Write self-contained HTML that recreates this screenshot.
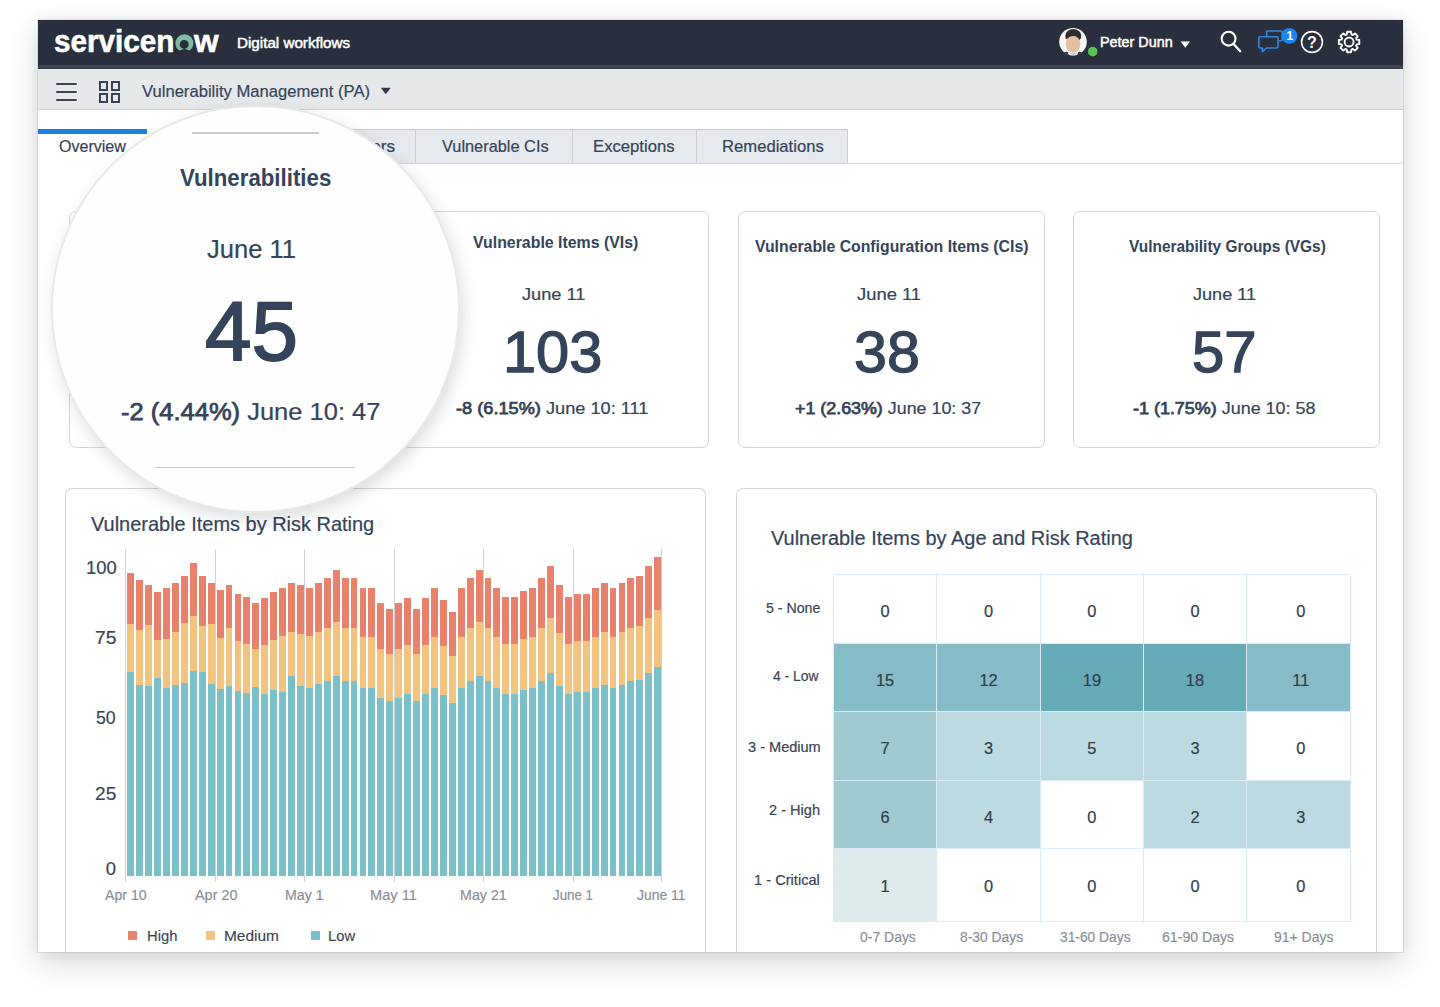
<!DOCTYPE html>
<html><head><meta charset="utf-8"><style>
html,body{margin:0;padding:0;}
body{width:1440px;height:1007px;overflow:hidden;background:#fff;position:relative;font-family:'Liberation Sans', sans-serif;}
.t{position:absolute;white-space:nowrap;transform-origin:0 0;font-family:'Liberation Sans', sans-serif;}
b{font-weight:bold;}
</style></head><body>
<div style="position:absolute;left:38.00px;top:20.00px;width:1365.00px;height:932.00px;background:#fff;box-shadow:0 0 0 1px rgba(0,0,0,0.07), 0 12px 28px rgba(0,0,0,0.15), 0 0 14px rgba(0,0,0,0.06);"></div>
<div style="position:absolute;left:38.00px;top:20.40px;width:1365.00px;height:44.60px;background:#292f3c;"></div>
<div style="position:absolute;left:38.00px;top:65.00px;width:1365.00px;height:3.50px;background:#3c4454;"></div>
<div style="position:absolute;left:38.00px;top:68.50px;width:1365.00px;height:41.80px;background:#e7e8ea;border-bottom:1px solid #cfd2d5;box-sizing:border-box;"></div>
<div style="position:absolute;left:56.00px;top:83.30px;width:20.50px;height:2.20px;background:#3a4352;border-radius:1px;"></div>
<div style="position:absolute;left:56.00px;top:91.20px;width:20.50px;height:2.20px;background:#3a4352;border-radius:1px;"></div>
<div style="position:absolute;left:56.00px;top:98.60px;width:20.50px;height:2.20px;background:#3a4352;border-radius:1px;"></div>
<div style="position:absolute;left:98.50px;top:81.00px;width:9.50px;height:9.50px;border:2px solid #3a4352;box-sizing:border-box;"></div>
<div style="position:absolute;left:110.50px;top:81.00px;width:9.50px;height:9.50px;border:2px solid #3a4352;box-sizing:border-box;"></div>
<div style="position:absolute;left:98.50px;top:93.00px;width:9.50px;height:9.50px;border:2px solid #3a4352;box-sizing:border-box;"></div>
<div style="position:absolute;left:110.50px;top:93.00px;width:9.50px;height:9.50px;border:2px solid #3a4352;box-sizing:border-box;"></div>
<div class="t" style="left:142.20px;top:83.10px;font-size:16.23px;line-height:16.23px;font-weight:normal;color:#35445a;transform:scaleX(1.0243);-webkit-text-stroke:0.20px #35445a;">Vulnerability Management (PA)</div>
<svg style="position:absolute;left:380px;top:87px" width="12" height="8"><polygon points="0.8,0.8 10.8,0.8 5.8,7.2" fill="#2e3b4b"/></svg>
<div style="position:absolute;left:38.00px;top:162.80px;width:1365.00px;height:1.00px;background:#d6d9dd;"></div>
<div style="position:absolute;left:200.00px;top:129.30px;width:648.00px;height:34.00px;background:#e6e9ed;border:1px solid #ccd0d5;border-bottom:none;box-sizing:border-box;"></div>
<div style="position:absolute;left:415.10px;top:129.30px;width:1.00px;height:34.00px;background:#ccd0d5;"></div>
<div style="position:absolute;left:572.10px;top:129.30px;width:1.00px;height:34.00px;background:#ccd0d5;"></div>
<div style="position:absolute;left:696.40px;top:129.30px;width:1.00px;height:34.00px;background:#ccd0d5;"></div>
<div style="position:absolute;left:38.00px;top:129.30px;width:109.30px;height:34.60px;background:#fff;"></div>
<div style="position:absolute;left:38.00px;top:128.90px;width:109.30px;height:4.80px;background:#1b7fe3;"></div>
<div class="t" style="left:58.62px;top:137.78px;font-size:16.38px;line-height:16.38px;font-weight:normal;color:#35445a;transform:scaleX(0.9806);-webkit-text-stroke:0.20px #35445a;">Overview</div>
<div class="t" style="left:250.00px;top:137.68px;font-size:16.38px;line-height:16.38px;font-weight:normal;color:#35445a;transform:scaleX(1.0555);-webkit-text-stroke:0.20px #35445a;">Vulnerability Filters</div>
<div class="t" style="left:442.40px;top:137.68px;font-size:16.38px;line-height:16.38px;font-weight:normal;color:#35445a;transform:scaleX(0.9991);-webkit-text-stroke:0.20px #35445a;">Vulnerable CIs</div>
<div class="t" style="left:592.73px;top:137.68px;font-size:16.38px;line-height:16.38px;font-weight:normal;color:#35445a;transform:scaleX(1.0196);-webkit-text-stroke:0.20px #35445a;">Exceptions</div>
<div class="t" style="left:721.88px;top:137.68px;font-size:16.38px;line-height:16.38px;font-weight:normal;color:#35445a;transform:scaleX(1.0172);-webkit-text-stroke:0.20px #35445a;">Remediations</div>
<div style="position:absolute;left:68.70px;top:211.00px;width:306.60px;height:236.80px;border:1px solid #d3d5d8;border-radius:7px;box-sizing:border-box;background:#fff;"></div>
<div style="position:absolute;left:402.00px;top:211.00px;width:306.80px;height:236.80px;border:1px solid #d3d5d8;border-radius:7px;box-sizing:border-box;background:#fff;"></div>
<div style="position:absolute;left:737.60px;top:211.00px;width:307.20px;height:236.80px;border:1px solid #d3d5d8;border-radius:7px;box-sizing:border-box;background:#fff;"></div>
<div style="position:absolute;left:1073.40px;top:211.00px;width:307.00px;height:236.80px;border:1px solid #d3d5d8;border-radius:7px;box-sizing:border-box;background:#fff;"></div>
<div class="t" style="left:473.30px;top:234.08px;font-size:16.38px;line-height:16.38px;font-weight:bold;color:#35445a;transform:scaleX(0.9712);">Vulnerable Items (VIs)</div>
<div class="t" style="left:521.60px;top:285.76px;font-size:17.10px;line-height:17.10px;font-weight:normal;color:#35445a;transform:scaleX(1.0644);-webkit-text-stroke:0.20px #35445a;">June 11</div>
<div class="t" style="left:503.31px;top:323.13px;font-size:58.26px;line-height:58.26px;font-weight:normal;color:#35445a;transform:scaleX(1.0220);-webkit-text-stroke:1.30px #35445a;">103</div>
<div class="t" style="left:456.40px;top:399.80px;font-size:16.23px;line-height:16.23px;font-weight:normal;color:#35445a;transform:scaleX(1.1211);-webkit-text-stroke:0.20px #35445a;"><span style="-webkit-text-stroke:0.75px currentColor">-8 (6.15%)</span> June 10: 111</div>
<div class="t" style="left:755.00px;top:238.28px;font-size:16.38px;line-height:16.38px;font-weight:bold;color:#35445a;transform:scaleX(0.9663);">Vulnerable Configuration Items (CIs)</div>
<div class="t" style="left:856.50px;top:285.76px;font-size:17.10px;line-height:17.10px;font-weight:normal;color:#35445a;transform:scaleX(1.0763);-webkit-text-stroke:0.20px #35445a;">June 11</div>
<div class="t" style="left:854.47px;top:323.13px;font-size:58.26px;line-height:58.26px;font-weight:normal;color:#35445a;transform:scaleX(1.0164);-webkit-text-stroke:1.30px #35445a;">38</div>
<div class="t" style="left:795.00px;top:399.80px;font-size:16.23px;line-height:16.23px;font-weight:normal;color:#35445a;transform:scaleX(1.1006);-webkit-text-stroke:0.20px #35445a;"><span style="-webkit-text-stroke:0.75px currentColor">+1 (2.63%)</span> June 10: 37</div>
<div class="t" style="left:1128.50px;top:238.28px;font-size:16.38px;line-height:16.38px;font-weight:bold;color:#35445a;transform:scaleX(0.9442);">Vulnerability Groups (VGs)</div>
<div class="t" style="left:1192.50px;top:285.76px;font-size:17.10px;line-height:17.10px;font-weight:normal;color:#35445a;transform:scaleX(1.0593);-webkit-text-stroke:0.20px #35445a;">June 11</div>
<div class="t" style="left:1191.81px;top:323.13px;font-size:58.26px;line-height:58.26px;font-weight:normal;color:#35445a;transform:scaleX(0.9967);-webkit-text-stroke:1.30px #35445a;">57</div>
<div class="t" style="left:1132.50px;top:399.80px;font-size:16.23px;line-height:16.23px;font-weight:normal;color:#35445a;transform:scaleX(1.1061);-webkit-text-stroke:0.20px #35445a;"><span style="-webkit-text-stroke:0.75px currentColor">-1 (1.75%)</span> June 10: 58</div>
<div style="position:absolute;left:65.20px;top:488.30px;width:640.80px;height:463.70px;border:1px solid #d3d5d8;border-radius:7px;box-sizing:border-box;background:#fff;border-bottom:none;border-bottom-left-radius:0;border-bottom-right-radius:0;"></div>
<div style="position:absolute;left:736.30px;top:488.30px;width:640.90px;height:463.70px;border:1px solid #d3d5d8;border-radius:7px;box-sizing:border-box;background:#fff;border-bottom:none;border-bottom-left-radius:0;border-bottom-right-radius:0;"></div>
<div class="t" style="left:91.00px;top:513.55px;font-size:20.29px;line-height:20.29px;font-weight:normal;color:#35445a;transform:scaleX(0.9840);-webkit-text-stroke:0.20px #35445a;">Vulnerable Items by Risk Rating</div>
<div class="t" style="left:771.10px;top:527.88px;font-size:20.72px;line-height:20.72px;font-weight:normal;color:#35445a;transform:scaleX(0.9627);-webkit-text-stroke:0.20px #35445a;">Vulnerable Items by Age and Risk Rating</div>
<div style="position:absolute;left:125.30px;top:548.70px;width:1.00px;height:333.30px;background:#cfd2d6;"></div>
<div style="position:absolute;left:214.80px;top:548.70px;width:1.00px;height:333.30px;background:#cfd2d6;"></div>
<div style="position:absolute;left:304.10px;top:548.70px;width:1.00px;height:333.30px;background:#cfd2d6;"></div>
<div style="position:absolute;left:393.90px;top:548.70px;width:1.00px;height:333.30px;background:#cfd2d6;"></div>
<div style="position:absolute;left:483.30px;top:548.70px;width:1.00px;height:333.30px;background:#cfd2d6;"></div>
<div style="position:absolute;left:573.00px;top:548.70px;width:1.00px;height:333.30px;background:#cfd2d6;"></div>
<div style="position:absolute;left:661.10px;top:548.70px;width:1.00px;height:333.30px;background:#cfd2d6;"></div>
<div style="position:absolute;left:127.35px;top:572.80px;width:6.9px;height:303.40px;background:linear-gradient(to bottom,#e9826c 0,#e9826c 51.20px,#f2c47f 51.20px,#f2c47f 98.80px,#7bbfc8 98.80px,#7bbfc8 100%)"></div>
<div style="position:absolute;left:136.28px;top:580.00px;width:6.9px;height:296.20px;background:linear-gradient(to bottom,#e9826c 0,#e9826c 49.70px,#f2c47f 49.70px,#f2c47f 104.80px,#7bbfc8 104.80px,#7bbfc8 100%)"></div>
<div style="position:absolute;left:145.21px;top:584.70px;width:6.9px;height:291.50px;background:linear-gradient(to bottom,#e9826c 0,#e9826c 40.20px,#f2c47f 40.20px,#f2c47f 101.30px,#7bbfc8 101.30px,#7bbfc8 100%)"></div>
<div style="position:absolute;left:154.14px;top:591.90px;width:6.9px;height:284.30px;background:linear-gradient(to bottom,#e9826c 0,#e9826c 48.00px,#f2c47f 48.00px,#f2c47f 85.80px,#7bbfc8 85.80px,#7bbfc8 100%)"></div>
<div style="position:absolute;left:163.07px;top:587.90px;width:6.9px;height:288.30px;background:linear-gradient(to bottom,#e9826c 0,#e9826c 51.20px,#f2c47f 51.20px,#f2c47f 99.60px,#7bbfc8 99.60px,#7bbfc8 100%)"></div>
<div style="position:absolute;left:172.00px;top:582.80px;width:6.9px;height:293.40px;background:linear-gradient(to bottom,#e9826c 0,#e9826c 49.10px,#f2c47f 49.10px,#f2c47f 101.60px,#7bbfc8 101.60px,#7bbfc8 100%)"></div>
<div style="position:absolute;left:180.93px;top:575.70px;width:6.9px;height:300.50px;background:linear-gradient(to bottom,#e9826c 0,#e9826c 46.80px,#f2c47f 46.80px,#f2c47f 106.80px,#7bbfc8 106.80px,#7bbfc8 100%)"></div>
<div style="position:absolute;left:189.86px;top:563.30px;width:6.9px;height:312.90px;background:linear-gradient(to bottom,#e9826c 0,#e9826c 52.70px,#f2c47f 52.70px,#f2c47f 108.30px,#7bbfc8 108.30px,#7bbfc8 100%)"></div>
<div style="position:absolute;left:198.79px;top:575.70px;width:6.9px;height:300.50px;background:linear-gradient(to bottom,#e9826c 0,#e9826c 50.30px,#f2c47f 50.30px,#f2c47f 96.40px,#7bbfc8 96.40px,#7bbfc8 100%)"></div>
<div style="position:absolute;left:207.72px;top:582.80px;width:6.9px;height:293.40px;background:linear-gradient(to bottom,#e9826c 0,#e9826c 41.30px,#f2c47f 41.30px,#f2c47f 101.20px,#7bbfc8 101.20px,#7bbfc8 100%)"></div>
<div style="position:absolute;left:216.65px;top:590.00px;width:6.9px;height:286.20px;background:linear-gradient(to bottom,#e9826c 0,#e9826c 48.00px,#f2c47f 48.00px,#f2c47f 98.80px,#7bbfc8 98.80px,#7bbfc8 100%)"></div>
<div style="position:absolute;left:225.58px;top:584.70px;width:6.9px;height:291.50px;background:linear-gradient(to bottom,#e9826c 0,#e9826c 42.90px,#f2c47f 42.90px,#f2c47f 100.90px,#7bbfc8 100.90px,#7bbfc8 100%)"></div>
<div style="position:absolute;left:234.51px;top:593.80px;width:6.9px;height:282.40px;background:linear-gradient(to bottom,#e9826c 0,#e9826c 47.00px,#f2c47f 47.00px,#f2c47f 97.40px,#7bbfc8 97.40px,#7bbfc8 100%)"></div>
<div style="position:absolute;left:243.44px;top:597.40px;width:6.9px;height:278.80px;background:linear-gradient(to bottom,#e9826c 0,#e9826c 47.20px,#f2c47f 47.20px,#f2c47f 96.50px,#7bbfc8 96.50px,#7bbfc8 100%)"></div>
<div style="position:absolute;left:252.37px;top:603.00px;width:6.9px;height:273.20px;background:linear-gradient(to bottom,#e9826c 0,#e9826c 46.10px,#f2c47f 46.10px,#f2c47f 84.20px,#7bbfc8 84.20px,#7bbfc8 100%)"></div>
<div style="position:absolute;left:261.30px;top:597.80px;width:6.9px;height:278.40px;background:linear-gradient(to bottom,#e9826c 0,#e9826c 46.80px,#f2c47f 46.80px,#f2c47f 96.10px,#7bbfc8 96.10px,#7bbfc8 100%)"></div>
<div style="position:absolute;left:270.23px;top:591.90px;width:6.9px;height:284.30px;background:linear-gradient(to bottom,#e9826c 0,#e9826c 48.00px,#f2c47f 48.00px,#f2c47f 98.00px,#7bbfc8 98.00px,#7bbfc8 100%)"></div>
<div style="position:absolute;left:279.16px;top:587.90px;width:6.9px;height:288.30px;background:linear-gradient(to bottom,#e9826c 0,#e9826c 48.20px,#f2c47f 48.20px,#f2c47f 104.10px,#7bbfc8 104.10px,#7bbfc8 100%)"></div>
<div style="position:absolute;left:288.09px;top:582.80px;width:6.9px;height:293.40px;background:linear-gradient(to bottom,#e9826c 0,#e9826c 49.30px,#f2c47f 49.30px,#f2c47f 92.80px,#7bbfc8 92.80px,#7bbfc8 100%)"></div>
<div style="position:absolute;left:297.02px;top:584.70px;width:6.9px;height:291.50px;background:linear-gradient(to bottom,#e9826c 0,#e9826c 49.00px,#f2c47f 49.00px,#f2c47f 100.90px,#7bbfc8 100.90px,#7bbfc8 100%)"></div>
<div style="position:absolute;left:305.95px;top:587.90px;width:6.9px;height:288.30px;background:linear-gradient(to bottom,#e9826c 0,#e9826c 48.20px,#f2c47f 48.20px,#f2c47f 99.60px,#7bbfc8 99.60px,#7bbfc8 100%)"></div>
<div style="position:absolute;left:314.88px;top:582.80px;width:6.9px;height:293.40px;background:linear-gradient(to bottom,#e9826c 0,#e9826c 49.30px,#f2c47f 49.30px,#f2c47f 101.20px,#7bbfc8 101.20px,#7bbfc8 100%)"></div>
<div style="position:absolute;left:323.81px;top:577.60px;width:6.9px;height:298.60px;background:linear-gradient(to bottom,#e9826c 0,#e9826c 50.00px,#f2c47f 50.00px,#f2c47f 103.30px,#7bbfc8 103.30px,#7bbfc8 100%)"></div>
<div style="position:absolute;left:332.74px;top:570.10px;width:6.9px;height:306.10px;background:linear-gradient(to bottom,#e9826c 0,#e9826c 52.00px,#f2c47f 52.00px,#f2c47f 106.00px,#7bbfc8 106.00px,#7bbfc8 100%)"></div>
<div style="position:absolute;left:341.67px;top:577.60px;width:6.9px;height:298.60px;background:linear-gradient(to bottom,#e9826c 0,#e9826c 50.00px,#f2c47f 50.00px,#f2c47f 103.30px,#7bbfc8 103.30px,#7bbfc8 100%)"></div>
<div style="position:absolute;left:350.60px;top:577.60px;width:6.9px;height:298.60px;background:linear-gradient(to bottom,#e9826c 0,#e9826c 50.00px,#f2c47f 50.00px,#f2c47f 103.30px,#7bbfc8 103.30px,#7bbfc8 100%)"></div>
<div style="position:absolute;left:359.53px;top:587.90px;width:6.9px;height:288.30px;background:linear-gradient(to bottom,#e9826c 0,#e9826c 48.50px,#f2c47f 48.50px,#f2c47f 99.60px,#7bbfc8 99.60px,#7bbfc8 100%)"></div>
<div style="position:absolute;left:368.46px;top:587.90px;width:6.9px;height:288.30px;background:linear-gradient(to bottom,#e9826c 0,#e9826c 48.50px,#f2c47f 48.50px,#f2c47f 99.60px,#7bbfc8 99.60px,#7bbfc8 100%)"></div>
<div style="position:absolute;left:377.39px;top:603.00px;width:6.9px;height:273.20px;background:linear-gradient(to bottom,#e9826c 0,#e9826c 46.10px,#f2c47f 46.10px,#f2c47f 94.50px,#7bbfc8 94.50px,#7bbfc8 100%)"></div>
<div style="position:absolute;left:386.32px;top:609.00px;width:6.9px;height:267.20px;background:linear-gradient(to bottom,#e9826c 0,#e9826c 44.90px,#f2c47f 44.90px,#f2c47f 92.50px,#7bbfc8 92.50px,#7bbfc8 100%)"></div>
<div style="position:absolute;left:395.25px;top:603.00px;width:6.9px;height:273.20px;background:linear-gradient(to bottom,#e9826c 0,#e9826c 46.10px,#f2c47f 46.10px,#f2c47f 94.50px,#7bbfc8 94.50px,#7bbfc8 100%)"></div>
<div style="position:absolute;left:404.18px;top:597.80px;width:6.9px;height:278.40px;background:linear-gradient(to bottom,#e9826c 0,#e9826c 46.80px,#f2c47f 46.80px,#f2c47f 96.10px,#7bbfc8 96.10px,#7bbfc8 100%)"></div>
<div style="position:absolute;left:413.11px;top:609.00px;width:6.9px;height:267.20px;background:linear-gradient(to bottom,#e9826c 0,#e9826c 44.90px,#f2c47f 44.90px,#f2c47f 92.50px,#7bbfc8 92.50px,#7bbfc8 100%)"></div>
<div style="position:absolute;left:422.04px;top:597.80px;width:6.9px;height:278.40px;background:linear-gradient(to bottom,#e9826c 0,#e9826c 46.80px,#f2c47f 46.80px,#f2c47f 96.10px,#7bbfc8 96.10px,#7bbfc8 100%)"></div>
<div style="position:absolute;left:430.97px;top:587.90px;width:6.9px;height:288.30px;background:linear-gradient(to bottom,#e9826c 0,#e9826c 48.50px,#f2c47f 48.50px,#f2c47f 99.60px,#7bbfc8 99.60px,#7bbfc8 100%)"></div>
<div style="position:absolute;left:439.90px;top:600.10px;width:6.9px;height:276.10px;background:linear-gradient(to bottom,#e9826c 0,#e9826c 46.10px,#f2c47f 46.10px,#f2c47f 95.40px,#7bbfc8 95.40px,#7bbfc8 100%)"></div>
<div style="position:absolute;left:448.83px;top:612.10px;width:6.9px;height:264.10px;background:linear-gradient(to bottom,#e9826c 0,#e9826c 44.10px,#f2c47f 44.10px,#f2c47f 91.30px,#7bbfc8 91.30px,#7bbfc8 100%)"></div>
<div style="position:absolute;left:457.76px;top:587.90px;width:6.9px;height:288.30px;background:linear-gradient(to bottom,#e9826c 0,#e9826c 48.50px,#f2c47f 48.50px,#f2c47f 99.60px,#7bbfc8 99.60px,#7bbfc8 100%)"></div>
<div style="position:absolute;left:466.69px;top:577.60px;width:6.9px;height:298.60px;background:linear-gradient(to bottom,#e9826c 0,#e9826c 50.00px,#f2c47f 50.00px,#f2c47f 103.30px,#7bbfc8 103.30px,#7bbfc8 100%)"></div>
<div style="position:absolute;left:475.62px;top:570.10px;width:6.9px;height:306.10px;background:linear-gradient(to bottom,#e9826c 0,#e9826c 52.00px,#f2c47f 52.00px,#f2c47f 106.00px,#7bbfc8 106.00px,#7bbfc8 100%)"></div>
<div style="position:absolute;left:484.55px;top:577.60px;width:6.9px;height:298.60px;background:linear-gradient(to bottom,#e9826c 0,#e9826c 50.00px,#f2c47f 50.00px,#f2c47f 103.30px,#7bbfc8 103.30px,#7bbfc8 100%)"></div>
<div style="position:absolute;left:493.48px;top:587.90px;width:6.9px;height:288.30px;background:linear-gradient(to bottom,#e9826c 0,#e9826c 48.50px,#f2c47f 48.50px,#f2c47f 99.60px,#7bbfc8 99.60px,#7bbfc8 100%)"></div>
<div style="position:absolute;left:502.41px;top:596.60px;width:6.9px;height:279.60px;background:linear-gradient(to bottom,#e9826c 0,#e9826c 46.90px,#f2c47f 46.90px,#f2c47f 97.00px,#7bbfc8 97.00px,#7bbfc8 100%)"></div>
<div style="position:absolute;left:511.34px;top:596.60px;width:6.9px;height:279.60px;background:linear-gradient(to bottom,#e9826c 0,#e9826c 46.90px,#f2c47f 46.90px,#f2c47f 97.00px,#7bbfc8 97.00px,#7bbfc8 100%)"></div>
<div style="position:absolute;left:520.27px;top:590.80px;width:6.9px;height:285.40px;background:linear-gradient(to bottom,#e9826c 0,#e9826c 47.90px,#f2c47f 47.90px,#f2c47f 98.80px,#7bbfc8 98.80px,#7bbfc8 100%)"></div>
<div style="position:absolute;left:529.20px;top:587.90px;width:6.9px;height:288.30px;background:linear-gradient(to bottom,#e9826c 0,#e9826c 48.50px,#f2c47f 48.50px,#f2c47f 99.60px,#7bbfc8 99.60px,#7bbfc8 100%)"></div>
<div style="position:absolute;left:538.13px;top:577.60px;width:6.9px;height:298.60px;background:linear-gradient(to bottom,#e9826c 0,#e9826c 50.00px,#f2c47f 50.00px,#f2c47f 103.30px,#7bbfc8 103.30px,#7bbfc8 100%)"></div>
<div style="position:absolute;left:547.06px;top:566.40px;width:6.9px;height:309.80px;background:linear-gradient(to bottom,#e9826c 0,#e9826c 52.00px,#f2c47f 52.00px,#f2c47f 107.30px,#7bbfc8 107.30px,#7bbfc8 100%)"></div>
<div style="position:absolute;left:555.99px;top:584.70px;width:6.9px;height:291.50px;background:linear-gradient(to bottom,#e9826c 0,#e9826c 48.50px,#f2c47f 48.50px,#f2c47f 100.90px,#7bbfc8 100.90px,#7bbfc8 100%)"></div>
<div style="position:absolute;left:564.92px;top:597.00px;width:6.9px;height:279.20px;background:linear-gradient(to bottom,#e9826c 0,#e9826c 46.50px,#f2c47f 46.50px,#f2c47f 96.60px,#7bbfc8 96.60px,#7bbfc8 100%)"></div>
<div style="position:absolute;left:573.85px;top:593.90px;width:6.9px;height:282.30px;background:linear-gradient(to bottom,#e9826c 0,#e9826c 47.20px,#f2c47f 47.20px,#f2c47f 98.10px,#7bbfc8 98.10px,#7bbfc8 100%)"></div>
<div style="position:absolute;left:582.78px;top:593.90px;width:6.9px;height:282.30px;background:linear-gradient(to bottom,#e9826c 0,#e9826c 47.20px,#f2c47f 47.20px,#f2c47f 98.10px,#7bbfc8 98.10px,#7bbfc8 100%)"></div>
<div style="position:absolute;left:591.71px;top:587.90px;width:6.9px;height:288.30px;background:linear-gradient(to bottom,#e9826c 0,#e9826c 48.50px,#f2c47f 48.50px,#f2c47f 99.60px,#7bbfc8 99.60px,#7bbfc8 100%)"></div>
<div style="position:absolute;left:600.64px;top:582.80px;width:6.9px;height:293.40px;background:linear-gradient(to bottom,#e9826c 0,#e9826c 49.10px,#f2c47f 49.10px,#f2c47f 101.50px,#7bbfc8 101.50px,#7bbfc8 100%)"></div>
<div style="position:absolute;left:609.57px;top:587.90px;width:6.9px;height:288.30px;background:linear-gradient(to bottom,#e9826c 0,#e9826c 48.50px,#f2c47f 48.50px,#f2c47f 99.60px,#7bbfc8 99.60px,#7bbfc8 100%)"></div>
<div style="position:absolute;left:618.50px;top:582.80px;width:6.9px;height:293.40px;background:linear-gradient(to bottom,#e9826c 0,#e9826c 49.10px,#f2c47f 49.10px,#f2c47f 101.50px,#7bbfc8 101.50px,#7bbfc8 100%)"></div>
<div style="position:absolute;left:627.43px;top:577.60px;width:6.9px;height:298.60px;background:linear-gradient(to bottom,#e9826c 0,#e9826c 50.00px,#f2c47f 50.00px,#f2c47f 103.30px,#7bbfc8 103.30px,#7bbfc8 100%)"></div>
<div style="position:absolute;left:636.36px;top:575.70px;width:6.9px;height:300.50px;background:linear-gradient(to bottom,#e9826c 0,#e9826c 50.30px,#f2c47f 50.30px,#f2c47f 104.00px,#7bbfc8 104.00px,#7bbfc8 100%)"></div>
<div style="position:absolute;left:645.29px;top:566.40px;width:6.9px;height:309.80px;background:linear-gradient(to bottom,#e9826c 0,#e9826c 52.00px,#f2c47f 52.00px,#f2c47f 107.30px,#7bbfc8 107.30px,#7bbfc8 100%)"></div>
<div style="position:absolute;left:654.22px;top:557.20px;width:6.9px;height:319.00px;background:linear-gradient(to bottom,#e9826c 0,#e9826c 53.40px,#f2c47f 53.40px,#f2c47f 110.50px,#7bbfc8 110.50px,#7bbfc8 100%)"></div>
<div class="t" style="left:85.59px;top:559.08px;font-size:18.26px;line-height:18.26px;font-weight:normal;color:#3a4555;transform:scaleX(1.0069);-webkit-text-stroke:0.20px #3a4555;">100</div>
<div class="t" style="left:94.90px;top:629.99px;font-size:17.54px;line-height:17.54px;font-weight:normal;color:#3a4555;transform:scaleX(1.1000);-webkit-text-stroke:0.20px #3a4555;">75</div>
<div class="t" style="left:96.01px;top:709.65px;font-size:17.83px;line-height:17.83px;font-weight:normal;color:#3a4555;transform:scaleX(0.9895);-webkit-text-stroke:0.20px #3a4555;">50</div>
<div class="t" style="left:95.43px;top:786.45px;font-size:17.83px;line-height:17.83px;font-weight:normal;color:#3a4555;transform:scaleX(1.0722);-webkit-text-stroke:0.20px #3a4555;">25</div>
<div class="t" style="left:105.80px;top:860.06px;font-size:18.41px;line-height:18.41px;font-weight:normal;color:#3a4555;transform:scaleX(1.0000);-webkit-text-stroke:0.20px #3a4555;">0</div>
<div class="t" style="left:105.00px;top:888.38px;font-size:14.49px;line-height:14.49px;font-weight:normal;color:#8b9097;transform:scaleX(0.9762);-webkit-text-stroke:0.20px #8b9097;">Apr 10</div>
<div class="t" style="left:194.70px;top:888.38px;font-size:14.49px;line-height:14.49px;font-weight:normal;color:#8b9097;transform:scaleX(0.9952);-webkit-text-stroke:0.20px #8b9097;">Apr 20</div>
<div class="t" style="left:284.92px;top:888.38px;font-size:14.49px;line-height:14.49px;font-weight:normal;color:#8b9097;transform:scaleX(0.9763);-webkit-text-stroke:0.20px #8b9097;">May 1</div>
<div class="t" style="left:370.29px;top:888.38px;font-size:14.49px;line-height:14.49px;font-weight:normal;color:#8b9097;transform:scaleX(1.0089);-webkit-text-stroke:0.20px #8b9097;">May 11</div>
<div class="t" style="left:460.12px;top:888.38px;font-size:14.49px;line-height:14.49px;font-weight:normal;color:#8b9097;transform:scaleX(0.9848);-webkit-text-stroke:0.20px #8b9097;">May 21</div>
<div class="t" style="left:553.20px;top:888.38px;font-size:14.49px;line-height:14.49px;font-weight:normal;color:#8b9097;transform:scaleX(0.9163);-webkit-text-stroke:0.20px #8b9097;">June 1</div>
<div class="t" style="left:637.40px;top:888.38px;font-size:14.49px;line-height:14.49px;font-weight:normal;color:#8b9097;transform:scaleX(0.9600);-webkit-text-stroke:0.20px #8b9097;">June 11</div>
<div style="position:absolute;left:128.30px;top:930.80px;width:8.90px;height:9.20px;background:#e9826c;"></div>
<div style="position:absolute;left:205.80px;top:930.80px;width:9.00px;height:9.20px;background:#f2c47f;"></div>
<div style="position:absolute;left:310.50px;top:930.80px;width:9.00px;height:9.20px;background:#7bbfc8;"></div>
<div class="t" style="left:146.51px;top:928.90px;font-size:14.86px;line-height:14.86px;font-weight:normal;color:#3a4555;transform:scaleX(0.9931);-webkit-text-stroke:0.15px #3a4555;">High</div>
<div class="t" style="left:223.96px;top:928.90px;font-size:14.86px;line-height:14.86px;font-weight:normal;color:#3a4555;transform:scaleX(1.0392);-webkit-text-stroke:0.15px #3a4555;">Medium</div>
<div class="t" style="left:328.21px;top:928.90px;font-size:14.86px;line-height:14.86px;font-weight:normal;color:#3a4555;transform:scaleX(0.9923);-webkit-text-stroke:0.15px #3a4555;">Low</div>
<div style="position:absolute;left:833.50px;top:574.50px;width:103.10px;height:69.10px;background:#ffffff;"></div>
<div style="position:absolute;left:936.60px;top:574.50px;width:103.80px;height:69.10px;background:#ffffff;"></div>
<div style="position:absolute;left:1040.40px;top:574.50px;width:103.00px;height:69.10px;background:#ffffff;"></div>
<div style="position:absolute;left:1143.40px;top:574.50px;width:103.10px;height:69.10px;background:#ffffff;"></div>
<div style="position:absolute;left:1246.50px;top:574.50px;width:103.50px;height:69.10px;background:#ffffff;"></div>
<div style="position:absolute;left:833.50px;top:643.60px;width:103.10px;height:68.00px;background:#86bcc6;"></div>
<div style="position:absolute;left:936.60px;top:643.60px;width:103.80px;height:68.00px;background:#86bcc6;"></div>
<div style="position:absolute;left:1040.40px;top:643.60px;width:103.00px;height:68.00px;background:#67abb8;"></div>
<div style="position:absolute;left:1143.40px;top:643.60px;width:103.10px;height:68.00px;background:#67abb8;"></div>
<div style="position:absolute;left:1246.50px;top:643.60px;width:103.50px;height:68.00px;background:#86bcc6;"></div>
<div style="position:absolute;left:833.50px;top:711.60px;width:103.10px;height:68.60px;background:#a0c9d0;"></div>
<div style="position:absolute;left:936.60px;top:711.60px;width:103.80px;height:68.60px;background:#bcdadf;"></div>
<div style="position:absolute;left:1040.40px;top:711.60px;width:103.00px;height:68.60px;background:#bcdadf;"></div>
<div style="position:absolute;left:1143.40px;top:711.60px;width:103.10px;height:68.60px;background:#bcdadf;"></div>
<div style="position:absolute;left:1246.50px;top:711.60px;width:103.50px;height:68.60px;background:#ffffff;"></div>
<div style="position:absolute;left:833.50px;top:780.20px;width:103.10px;height:68.60px;background:#a0c9d0;"></div>
<div style="position:absolute;left:936.60px;top:780.20px;width:103.80px;height:68.60px;background:#bcdadf;"></div>
<div style="position:absolute;left:1040.40px;top:780.20px;width:103.00px;height:68.60px;background:#ffffff;"></div>
<div style="position:absolute;left:1143.40px;top:780.20px;width:103.10px;height:68.60px;background:#bcdadf;"></div>
<div style="position:absolute;left:1246.50px;top:780.20px;width:103.50px;height:68.60px;background:#bcdadf;"></div>
<div style="position:absolute;left:833.50px;top:848.80px;width:103.10px;height:72.70px;background:#deecee;"></div>
<div style="position:absolute;left:936.60px;top:848.80px;width:103.80px;height:72.70px;background:#ffffff;"></div>
<div style="position:absolute;left:1040.40px;top:848.80px;width:103.00px;height:72.70px;background:#ffffff;"></div>
<div style="position:absolute;left:1143.40px;top:848.80px;width:103.10px;height:72.70px;background:#ffffff;"></div>
<div style="position:absolute;left:1246.50px;top:848.80px;width:103.50px;height:72.70px;background:#ffffff;"></div>
<div style="position:absolute;left:833.00px;top:574.50px;width:1.00px;height:347.00px;background:#d9ebf4;"></div>
<div style="position:absolute;left:936.10px;top:574.50px;width:1.00px;height:347.00px;background:#d9ebf4;"></div>
<div style="position:absolute;left:1039.90px;top:574.50px;width:1.00px;height:347.00px;background:#d9ebf4;"></div>
<div style="position:absolute;left:1142.90px;top:574.50px;width:1.00px;height:347.00px;background:#d9ebf4;"></div>
<div style="position:absolute;left:1246.00px;top:574.50px;width:1.00px;height:347.00px;background:#d9ebf4;"></div>
<div style="position:absolute;left:1349.50px;top:574.50px;width:1.00px;height:347.00px;background:#d9ebf4;"></div>
<div style="position:absolute;left:833.50px;top:574.00px;width:516.50px;height:1.00px;background:#d9ebf4;"></div>
<div style="position:absolute;left:833.50px;top:643.10px;width:516.50px;height:1.00px;background:#d9ebf4;"></div>
<div style="position:absolute;left:833.50px;top:711.10px;width:516.50px;height:1.00px;background:#d9ebf4;"></div>
<div style="position:absolute;left:833.50px;top:779.70px;width:516.50px;height:1.00px;background:#d9ebf4;"></div>
<div style="position:absolute;left:833.50px;top:848.30px;width:516.50px;height:1.00px;background:#d9ebf4;"></div>
<div style="position:absolute;left:833.50px;top:921.00px;width:516.50px;height:1.00px;background:#d9ebf4;"></div>
<div class="t" style="left:885.05px;top:603.30px;width:60px;margin-left:-30px;text-align:center;font-size:16.4px;line-height:16px;color:#333d4b;-webkit-text-stroke:0.2px #333d4b;">0</div>
<div class="t" style="left:988.50px;top:603.30px;width:60px;margin-left:-30px;text-align:center;font-size:16.4px;line-height:16px;color:#333d4b;-webkit-text-stroke:0.2px #333d4b;">0</div>
<div class="t" style="left:1091.90px;top:603.30px;width:60px;margin-left:-30px;text-align:center;font-size:16.4px;line-height:16px;color:#333d4b;-webkit-text-stroke:0.2px #333d4b;">0</div>
<div class="t" style="left:1194.95px;top:603.30px;width:60px;margin-left:-30px;text-align:center;font-size:16.4px;line-height:16px;color:#333d4b;-webkit-text-stroke:0.2px #333d4b;">0</div>
<div class="t" style="left:1300.85px;top:603.30px;width:60px;margin-left:-30px;text-align:center;font-size:16.4px;line-height:16px;color:#333d4b;-webkit-text-stroke:0.2px #333d4b;">0</div>
<div class="t" style="left:885.05px;top:672.40px;width:60px;margin-left:-30px;text-align:center;font-size:16.4px;line-height:16px;color:#333d4b;-webkit-text-stroke:0.2px #333d4b;">15</div>
<div class="t" style="left:988.50px;top:672.40px;width:60px;margin-left:-30px;text-align:center;font-size:16.4px;line-height:16px;color:#333d4b;-webkit-text-stroke:0.2px #333d4b;">12</div>
<div class="t" style="left:1091.90px;top:672.40px;width:60px;margin-left:-30px;text-align:center;font-size:16.4px;line-height:16px;color:#333d4b;-webkit-text-stroke:0.2px #333d4b;">19</div>
<div class="t" style="left:1194.95px;top:672.40px;width:60px;margin-left:-30px;text-align:center;font-size:16.4px;line-height:16px;color:#333d4b;-webkit-text-stroke:0.2px #333d4b;">18</div>
<div class="t" style="left:1300.85px;top:672.40px;width:60px;margin-left:-30px;text-align:center;font-size:16.4px;line-height:16px;color:#333d4b;-webkit-text-stroke:0.2px #333d4b;">11</div>
<div class="t" style="left:885.05px;top:740.40px;width:60px;margin-left:-30px;text-align:center;font-size:16.4px;line-height:16px;color:#333d4b;-webkit-text-stroke:0.2px #333d4b;">7</div>
<div class="t" style="left:988.50px;top:740.40px;width:60px;margin-left:-30px;text-align:center;font-size:16.4px;line-height:16px;color:#333d4b;-webkit-text-stroke:0.2px #333d4b;">3</div>
<div class="t" style="left:1091.90px;top:740.40px;width:60px;margin-left:-30px;text-align:center;font-size:16.4px;line-height:16px;color:#333d4b;-webkit-text-stroke:0.2px #333d4b;">5</div>
<div class="t" style="left:1194.95px;top:740.40px;width:60px;margin-left:-30px;text-align:center;font-size:16.4px;line-height:16px;color:#333d4b;-webkit-text-stroke:0.2px #333d4b;">3</div>
<div class="t" style="left:1300.85px;top:740.40px;width:60px;margin-left:-30px;text-align:center;font-size:16.4px;line-height:16px;color:#333d4b;-webkit-text-stroke:0.2px #333d4b;">0</div>
<div class="t" style="left:885.05px;top:809.00px;width:60px;margin-left:-30px;text-align:center;font-size:16.4px;line-height:16px;color:#333d4b;-webkit-text-stroke:0.2px #333d4b;">6</div>
<div class="t" style="left:988.50px;top:809.00px;width:60px;margin-left:-30px;text-align:center;font-size:16.4px;line-height:16px;color:#333d4b;-webkit-text-stroke:0.2px #333d4b;">4</div>
<div class="t" style="left:1091.90px;top:809.00px;width:60px;margin-left:-30px;text-align:center;font-size:16.4px;line-height:16px;color:#333d4b;-webkit-text-stroke:0.2px #333d4b;">0</div>
<div class="t" style="left:1194.95px;top:809.00px;width:60px;margin-left:-30px;text-align:center;font-size:16.4px;line-height:16px;color:#333d4b;-webkit-text-stroke:0.2px #333d4b;">2</div>
<div class="t" style="left:1300.85px;top:809.00px;width:60px;margin-left:-30px;text-align:center;font-size:16.4px;line-height:16px;color:#333d4b;-webkit-text-stroke:0.2px #333d4b;">3</div>
<div class="t" style="left:885.05px;top:877.60px;width:60px;margin-left:-30px;text-align:center;font-size:16.4px;line-height:16px;color:#333d4b;-webkit-text-stroke:0.2px #333d4b;">1</div>
<div class="t" style="left:988.50px;top:877.60px;width:60px;margin-left:-30px;text-align:center;font-size:16.4px;line-height:16px;color:#333d4b;-webkit-text-stroke:0.2px #333d4b;">0</div>
<div class="t" style="left:1091.90px;top:877.60px;width:60px;margin-left:-30px;text-align:center;font-size:16.4px;line-height:16px;color:#333d4b;-webkit-text-stroke:0.2px #333d4b;">0</div>
<div class="t" style="left:1194.95px;top:877.60px;width:60px;margin-left:-30px;text-align:center;font-size:16.4px;line-height:16px;color:#333d4b;-webkit-text-stroke:0.2px #333d4b;">0</div>
<div class="t" style="left:1300.85px;top:877.60px;width:60px;margin-left:-30px;text-align:center;font-size:16.4px;line-height:16px;color:#333d4b;-webkit-text-stroke:0.2px #333d4b;">0</div>
<div class="t" style="left:765.74px;top:600.73px;font-size:14.78px;line-height:14.78px;font-weight:normal;color:#3a4555;transform:scaleX(0.9582);-webkit-text-stroke:0.20px #3a4555;">5 - None</div>
<div class="t" style="left:773.30px;top:668.78px;font-size:14.49px;line-height:14.49px;font-weight:normal;color:#3a4555;transform:scaleX(0.9604);-webkit-text-stroke:0.20px #3a4555;">4 - Low</div>
<div class="t" style="left:747.50px;top:739.73px;font-size:14.78px;line-height:14.78px;font-weight:normal;color:#3a4555;transform:scaleX(0.9849);-webkit-text-stroke:0.20px #3a4555;">3 - Medium</div>
<div class="t" style="left:769.01px;top:802.73px;font-size:14.78px;line-height:14.78px;font-weight:normal;color:#3a4555;transform:scaleX(0.9880);-webkit-text-stroke:0.20px #3a4555;">2 - High</div>
<div class="t" style="left:754.01px;top:872.73px;font-size:14.78px;line-height:14.78px;font-weight:normal;color:#3a4555;transform:scaleX(0.9908);-webkit-text-stroke:0.20px #3a4555;">1 - Critical</div>
<div class="t" style="left:859.70px;top:929.19px;font-size:15.07px;line-height:15.07px;font-weight:normal;color:#8b9097;transform:scaleX(0.9267);-webkit-text-stroke:0.20px #8b9097;">0-7 Days</div>
<div class="t" style="left:960.40px;top:929.19px;font-size:15.07px;line-height:15.07px;font-weight:normal;color:#8b9097;transform:scaleX(0.9191);-webkit-text-stroke:0.20px #8b9097;">8-30 Days</div>
<div class="t" style="left:1060.10px;top:929.19px;font-size:15.07px;line-height:15.07px;font-weight:normal;color:#8b9097;transform:scaleX(0.9156);-webkit-text-stroke:0.20px #8b9097;">31-60 Days</div>
<div class="t" style="left:1161.56px;top:929.19px;font-size:15.07px;line-height:15.07px;font-weight:normal;color:#8b9097;transform:scaleX(0.9368);-webkit-text-stroke:0.20px #8b9097;">61-90 Days</div>
<div class="t" style="left:1274.37px;top:929.19px;font-size:15.07px;line-height:15.07px;font-weight:normal;color:#8b9097;transform:scaleX(0.9270);-webkit-text-stroke:0.20px #8b9097;">91+ Days</div>
<div style="position:absolute;left:51.30px;top:104.60px;width:408.40px;height:408.40px;border-radius:50%;background:#fefefe;border:2.2px solid #e9e9e7;box-sizing:border-box;box-shadow:3px 6px 16px rgba(0,0,0,0.14);overflow:hidden">
<div style="position:absolute;left:138.30px;top:25.80px;width:127.20px;height:1.20px;background:#c9ccd0;"></div>
<div style="position:absolute;left:101.80px;top:360.20px;width:199.80px;height:1.20px;background:#c9ccd0;"></div>
</div>
<div class="t" style="left:180.10px;top:166.15px;font-size:24.06px;line-height:24.06px;font-weight:bold;color:#35445a;transform:scaleX(0.9252);">Vulnerabilities</div>
<div class="t" style="left:207.30px;top:236.57px;font-size:25.22px;line-height:25.22px;font-weight:normal;color:#35445a;transform:scaleX(1.0115);-webkit-text-stroke:0.20px #35445a;">June 11</div>
<div class="t" style="left:205.29px;top:291.38px;font-size:82.61px;line-height:82.61px;font-weight:normal;color:#35445a;transform:scaleX(1.0114);-webkit-text-stroke:1.80px #35445a;">45</div>
<div class="t" style="left:121.04px;top:399.75px;font-size:24.06px;line-height:24.06px;font-weight:normal;color:#35445a;transform:scaleX(1.0605);-webkit-text-stroke:0.20px #35445a;"><span style="-webkit-text-stroke:0.75px currentColor">-2 (4.44%)</span> June 10: 47</div>
<div class="t" style="left:236.66px;top:36.02px;font-size:14.57px;line-height:14.57px;font-weight:normal;color:#ffffff;transform:scaleX(1.0430);-webkit-text-stroke:0.50px #ffffff;">Digital workflows</div>
<div class="t" style="left:1099.94px;top:34.76px;font-size:14.93px;line-height:14.93px;font-weight:normal;color:#ffffff;transform:scaleX(0.9622);-webkit-text-stroke:0.50px #ffffff;">Peter Dunn</div>
<div class="t" style="left:53.97px;top:25.60px;font-size:31.88px;line-height:31.88px;font-weight:bold;color:#ffffff;transform:scaleX(0.9315);-webkit-text-stroke:0.60px #ffffff;">servicen</div>
<div class="t" style="left:194.40px;top:25.60px;font-size:31.88px;line-height:31.88px;font-weight:bold;color:#ffffff;transform:scaleX(0.9920);-webkit-text-stroke:0.60px #ffffff;">w</div>
<svg style="position:absolute;left:0;top:0" width="1440" height="70" viewBox="0 0 1440 70">
<path d="M 189.6 50.6 A 9 9 0 1 0 179.2 50.6 Q 184.4 47.6 189.6 50.6 Z M 188.7 44.4 A 4.5 4.5 0 1 0 179.7 44.4 A 4.5 4.5 0 1 0 188.7 44.4 Z" fill="#82b9a2" fill-rule="evenodd"/>
<defs><clipPath id="av"><circle cx="1073" cy="41.75" r="13.8"/></clipPath></defs>
<g clip-path="url(#av)">
<rect x="1058" y="27" width="30" height="30" fill="#f8f8f8"/>
<ellipse cx="1073.3" cy="35.8" rx="8.0" ry="6.8" fill="#34302f"/>
<ellipse cx="1073" cy="44.2" rx="7.4" ry="8.4" fill="#e2c0a6"/>
<path d="M 1065.6 39.5 Q 1065.4 31 1073.6 30.2 Q 1081.6 30.6 1081.2 39 Q 1078.5 35.4 1073.5 36 Q 1068.5 35.8 1065.6 39.5 Z" fill="#302c2b"/>
<path d="M 1059 58 Q 1061 52.5 1066.5 51.8 L 1073 54 L 1079.5 51.8 Q 1085 52.5 1087 58 Z" fill="#1f2a3b"/>
<path d="M 1067.5 51.6 L 1073 54.4 L 1078.5 51.6 L 1077.5 54.6 L 1073 56.5 L 1068.5 54.6 Z" fill="#f4f4f4"/>
</g>
<circle cx="1092.7" cy="51.6" r="5.6" fill="#1b2a1e"/>
<circle cx="1092.7" cy="51.6" r="4.9" fill="#5ac35a"/>
<polygon points="1180.6,41.6 1190,41.6 1185.3,47.8" fill="#ffffff"/>
<circle cx="1228.6" cy="38.7" r="6.9" fill="none" stroke="#ffffff" stroke-width="2.1"/>
<line x1="1233.8" y1="44.2" x2="1240.2" y2="51.2" stroke="#ffffff" stroke-width="2.3" stroke-linecap="round"/>
<path d="M 1266.6 36.2 L 1266.6 32.2 Q 1266.6 31 1267.8 31 L 1281 31 Q 1282.2 31 1282.2 32.2 L 1282.2 39.6 Q 1282.2 40.8 1281 40.8 L 1279 40.8" fill="none" stroke="#3288de" stroke-width="1.6"/>
<path d="M 1260.2 36.8 L 1276.6 36.8 Q 1278 36.8 1278 38.2 L 1278 46.6 Q 1278 48 1276.6 48 L 1266.4 48 L 1262.4 51.6 L 1262.4 48 L 1260.2 48 Q 1258.8 48 1258.8 46.6 L 1258.8 38.2 Q 1258.8 36.8 1260.2 36.8 Z" fill="none" stroke="#3288de" stroke-width="1.6" stroke-linejoin="round"/>
<circle cx="1289.4" cy="35.9" r="7.9" fill="#1d87ee"/>
<text x="1289.8" y="40.2" style="font-family:'Liberation Sans',sans-serif;font-weight:bold;font-size:12px" fill="#ffffff" text-anchor="middle">1</text>
<circle cx="1312" cy="42" r="10.4" fill="none" stroke="#ffffff" stroke-width="1.6"/>
<text x="1312.0" y="48.2" style="font-family:'Liberation Sans',sans-serif;font-weight:bold;font-size:16px" fill="#ffffff" text-anchor="middle">?</text>
<g transform="translate(1349.1 42)">
<path d="M -2.33 -7.55 L -1.96 -10.21 L 1.96 -10.21 L 2.33 -7.55 L 3.69 -6.99 L 5.83 -8.61 L 8.61 -5.83 L 6.99 -3.69 L 7.55 -2.33 L 10.21 -1.96 L 10.21 1.96 L 7.55 2.33 L 6.99 3.69 L 8.61 5.83 L 5.83 8.61 L 3.69 6.99 L 2.33 7.55 L 1.96 10.21 L -1.96 10.21 L -2.33 7.55 L -3.69 6.99 L -5.83 8.61 L -8.61 5.83 L -6.99 3.69 L -7.55 2.33 L -10.21 1.96 L -10.21 -1.96 L -7.55 -2.33 L -6.99 -3.69 L -8.61 -5.83 L -5.83 -8.61 L -3.69 -6.99 Z" fill="none" stroke="#ffffff" stroke-width="1.9" stroke-linejoin="round"/>
<circle cx="0" cy="0" r="4.5" fill="none" stroke="#ffffff" stroke-width="1.9"/>
</g>
</svg>
</body></html>
